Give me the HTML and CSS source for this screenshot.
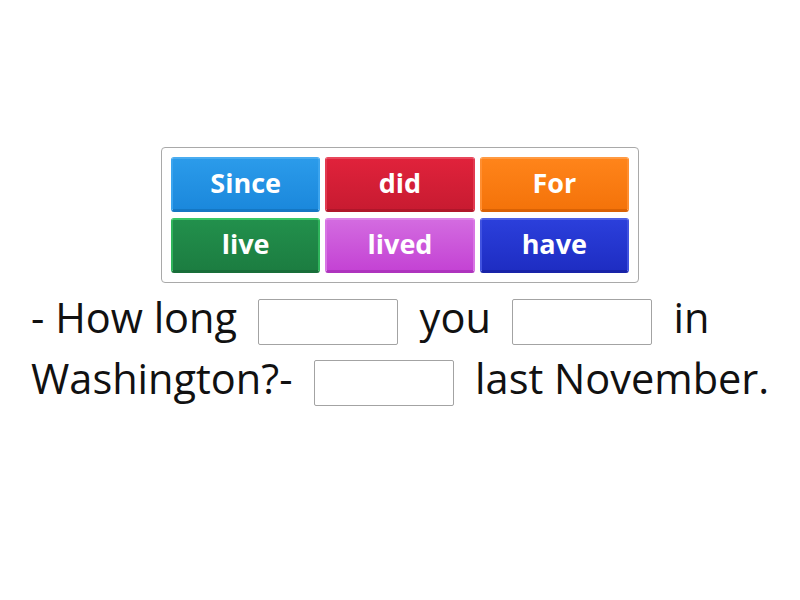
FILE: index.html
```html
<!DOCTYPE html>
<html lang="en">

<head>
    <meta charset="UTF-8">
    <meta name="viewport" content="width=device-width, initial-scale=1.0">
    <title>Complete the sentence</title>
    <link rel="stylesheet" href="styles.css">
</head>

<body>
    <section id="game">
        <div class="bank">
            <div class="tile blue">Since</div>
            <div class="tile red">did</div>
            <div class="tile orange">For</div>
            <div class="tile green">live</div>
            <div class="tile purple">lived</div>
            <div class="tile navy">have</div>
        </div>
        <p class="sentence">
            - How long <span class="gap"></span> you <span class="gap"></span> in
            Washington?- <span class="gap"></span> last November.
        </p>
    </section>
</body>

</html>
```

FILE: styles.css
```css
body {
    margin: 0;
    padding: 0;
    font-family: "Open Sans", "Liberation Sans", sans-serif;
    background: #fff;
}

#game {
    padding-top: 147px;
}

.bank {
    width: 458px;
    margin: 0 auto;
    padding: 9px;
    border: 1px solid #a9a9a9;
    border-radius: 4px;
    display: grid;
    grid-template-columns: repeat(3, 1fr);
    grid-auto-rows: 55px;
    column-gap: 5px;
    row-gap: 6px;
}

.tile {
    display: flex;
    align-items: center;
    justify-content: center;
    color: #fff;
    font-weight: 700;
    font-size: 27px;
    border-radius: 3px;
    box-sizing: border-box;
    border: 2px solid;
    border-bottom-width: 3px;
    padding-bottom: 3px;
}

.tile.blue {
    background: linear-gradient(#2b9bea, #1b88dc);
    border-color: #4aacf0 #3ba4ee #1477c4;
}

.tile.red {
    background: linear-gradient(#e0223b, #c81b31);
    border-color: #e8475b #e23a50 #b0162a;
}

.tile.orange {
    background: linear-gradient(#ff841a, #f4730a);
    border-color: #ff9a42 #ff8e30 #da6204;
}

.tile.green {
    background: linear-gradient(#22904c, #1c7d41);
    border-color: #36c766 #2fb45b #186e39;
}

.tile.purple {
    background: linear-gradient(#d36be0, #c443d4);
    border-color: #dd84e8 #d875e4 #ae34be;
}

.tile.navy {
    background: linear-gradient(#2b3fdb, #1e2dc3);
    border-color: #4d5fe4 #4052e0 #1823a8;
}

.sentence {
    margin: 4px 0 0;
    padding: 0 20px 0 31px;
    font-size: 41.5px;
    line-height: 61px;
    color: #111;
}

.gap {
    display: inline-block;
    width: 140px;
    height: 46px;
    box-sizing: border-box;
    border: 1px solid #a3a3a3;
    border-radius: 2px;
    margin: 0 10.5px;
    vertical-align: middle;
}
```
